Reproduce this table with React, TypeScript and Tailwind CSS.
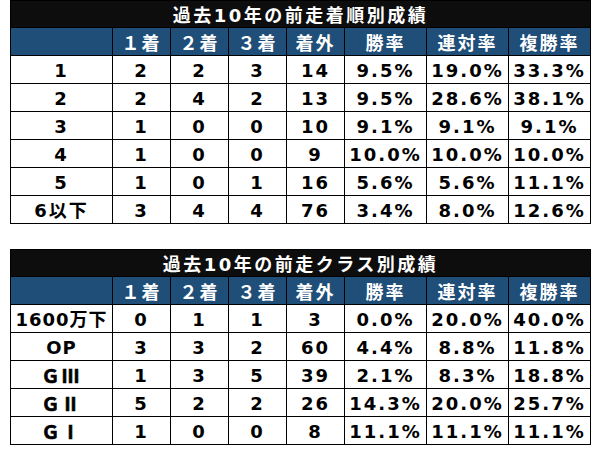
import React from "react";

const F = "font-['DejaVu_Sans','Noto_Sans_CJK_JP',sans-serif]";
const FJ = "font-['Noto_Sans_CJK_JP',sans-serif]";
const COLS = "grid grid-cols-[101px_57px_57px_57px_57px_81px_81px_81px] gap-px";

type Row = { label: string; cjk?: boolean; tight?: boolean; v: string[] };

const HEAD = ["", "１着", "２着", "３着", "着外", "勝率", "連対率", "複勝率"];

const T1: Row[] = [
  { label: "1", v: ["2", "2", "3", "14", "9.5%", "19.0%", "33.3%"] },
  { label: "2", v: ["2", "4", "2", "13", "9.5%", "28.6%", "38.1%"] },
  { label: "3", v: ["1", "0", "0", "10", "9.1%", "9.1%", "9.1%"] },
  { label: "4", v: ["1", "0", "0", "9", "10.0%", "10.0%", "10.0%"] },
  { label: "5", v: ["1", "0", "1", "16", "5.6%", "5.6%", "11.1%"] },
  { label: "6以下", v: ["3", "4", "4", "76", "3.4%", "8.0%", "12.6%"] },
];

const T2: Row[] = [
  { label: "1600万下", tight: true, v: ["0", "1", "1", "3", "0.0%", "20.0%", "40.0%"] },
  { label: "OP", tight: true, v: ["3", "3", "2", "60", "4.4%", "8.8%", "11.8%"] },
  { label: "ＧⅢ", cjk: true, v: ["1", "3", "5", "39", "2.1%", "8.3%", "18.8%"] },
  { label: "ＧⅡ", cjk: true, v: ["5", "2", "2", "26", "14.3%", "20.0%", "25.7%"] },
  { label: "ＧⅠ", cjk: true, v: ["1", "0", "0", "8", "11.1%", "11.1%", "11.1%"] },
];

function Table({ title, rows }: { title: string; rows: Row[] }) {
  return (
    <div className="w-[581px] bg-black p-px flex flex-col gap-px">
      <div
        className={`h-[26px] bg-[#0d0d0d] flex items-center justify-center pt-[3px] text-white font-bold text-[18px] tracking-[2.5px] ${F}`}
      >
        {title}
      </div>
      <div className={COLS}>
        {HEAD.map((h, i) => (
          <div
            key={i}
            className={`h-[27px] bg-[#1f4e78] flex items-center justify-center pt-[2px] text-white font-bold text-[18px] tracking-[2px] ${FJ}`}
          >
            {h}
          </div>
        ))}
      </div>
      {rows.map((r, ri) => (
        <div key={ri} className={COLS}>
          <div
            className={`h-[27px] bg-white flex items-center justify-center pt-[2px] text-black font-bold text-[18px] ${
              r.cjk ? `${FJ} [-webkit-text-stroke:0.7px_black]` : F
            } ${r.tight ? "tracking-[1px]" : "tracking-[2px]"} whitespace-nowrap`}
          >
            {r.label}
          </div>
          {r.v.map((v, i) => (
            <div
              key={i}
              className={`h-[27px] bg-white flex items-center justify-center pt-[2px] text-black font-bold text-[18px] tracking-[2px] whitespace-nowrap ${F}`}
            >
              {v}
            </div>
          ))}
        </div>
      ))}
    </div>
  );
}

export default function App() {
  return (
    <div className="w-[600px] h-[450px] bg-white pl-[10px] flex flex-col">
      <Table title="過去10年の前走着順別成績" rows={T1} />
      <div className="mt-[25px]">
        <Table title="過去10年の前走クラス別成績" rows={T2} />
      </div>
    </div>
  );
}
